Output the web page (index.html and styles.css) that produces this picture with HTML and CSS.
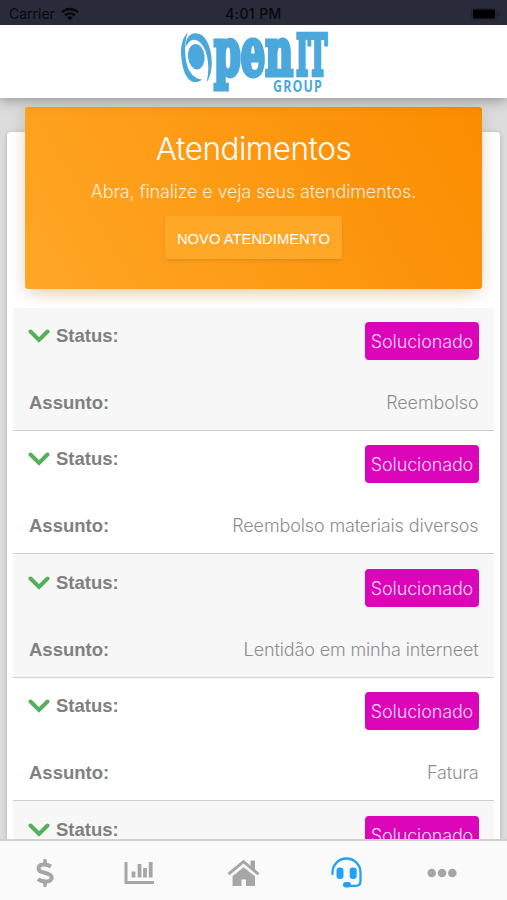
FILE: index.html
```
<!DOCTYPE html>
<html lang="pt-BR">
<head>
    <meta charset="UTF-8">
    <meta name="viewport" content="width=device-width, initial-scale=1.0">
    <title>Atendimentos</title>
    <link rel="stylesheet" href="styles.css">
</head>
<body>
    <div class="status-bar">
        <div class="carrier">
            <span>Carrier</span>
            <svg width="18" height="14" viewBox="0 0 18 14" fill="none" stroke="#08080c" stroke-width="2.4">
                <path d="M1 5.2a11.5 11.5 0 0 1 16 0"/>
                <path d="M4 8.4a7.2 7.2 0 0 1 10 0"/>
                <path d="M9 13.6l-3-3a4.3 4.3 0 0 1 6 0z" fill="#08080c" stroke="none"/>
            </svg>
        </div>
        <span class="time">4:01 PM</span>
        <div class="battery">
            <svg width="30" height="12" viewBox="0 0 30 12">
                <rect x="0.5" y="0.5" width="25" height="11" rx="3" fill="none" stroke="#222230"/>
                <rect x="2" y="1.500" width="22" height="9" rx="1.500" fill="#000"/>
                <path d="M27 4c2 .6 2 3.400 0 4z" fill="#1d1d29"/>
            </svg>
        </div>
    </div>

    <header class="header">
        <svg class="logo" width="150" height="68" viewBox="0 0 150 68" fill="#4aa8dc">
            <!-- swirl -->
            <ellipse cx="17.3" cy="29.700" rx="8.300" ry="12.800" transform="rotate(-6 17.300 29.700)"/>
            <path d="M8.800 5.500C3 11 1.500 20 2.200 29C3 42 7 52 13 54.500C17 56 21 54.500 23 52.500C16 52 10 46 7.800 37C5.500 27 5.500 14 8.800 5.500z"/>
            <path d="M7.500 13C9.500 8 13.500 5.800 17 6.200C24 6.500 29 13 31.500 24C34 35 33 48 27.500 55.500C30.500 44 29.500 33 26.500 24C23 15 17 11 12 13.500C9.500 15 8 17.500 6.800 20C6.800 17 6.900 15 7.500 13z"/>
            <g class="logo-word">
                <text transform="translate(35 47.500) scale(1 1.700)" font-size="38" textLength="79" lengthAdjust="spacingAndGlyphs">pen</text>
                <text transform="translate(117 47.500) scale(1 1.480)" font-size="38" textLength="31" lengthAdjust="spacingAndGlyphs">IT</text>
            </g>
            <text class="logo-group" x="94" y="65" textLength="50" lengthAdjust="spacingAndGlyphs">GROUP</text>
        </svg>
    </header>

    <main class="content">
        <div class="card">
            <div class="banner">
                <h1>Atendimentos</h1>
                <p>Abra, finalize e veja seus atendimentos.</p>
                <button class="btn">NOVO ATENDIMENTO</button>
            </div>

            <ul class="list">
                <li class="item">
                    <div class="row">
                        <div class="label"><svg class="chevron" viewBox="0 0 22 14"><path d="M2.500 2.500l8.500 8.500 8.500-8.500"/></svg>Status:</div>
                        <span class="badge"><span>Solucionado</span></span>
                    </div>
                    <div class="row subject"><b>Assunto:</b><span>Reembolso</span></div>
                </li>
                <li class="item">
                    <div class="row">
                        <div class="label"><svg class="chevron" viewBox="0 0 22 14"><path d="M2.500 2.500l8.500 8.500 8.500-8.500"/></svg>Status:</div>
                        <span class="badge"><span>Solucionado</span></span>
                    </div>
                    <div class="row subject"><b>Assunto:</b><span>Reembolso materiais diversos</span></div>
                </li>
                <li class="item">
                    <div class="row">
                        <div class="label"><svg class="chevron" viewBox="0 0 22 14"><path d="M2.500 2.500l8.500 8.500 8.500-8.500"/></svg>Status:</div>
                        <span class="badge"><span>Solucionado</span></span>
                    </div>
                    <div class="row subject"><b>Assunto:</b><span>Lentidão em minha interneet</span></div>
                </li>
                <li class="item">
                    <div class="row">
                        <div class="label"><svg class="chevron" viewBox="0 0 22 14"><path d="M2.500 2.500l8.500 8.500 8.500-8.500"/></svg>Status:</div>
                        <span class="badge"><span>Solucionado</span></span>
                    </div>
                    <div class="row subject"><b>Assunto:</b><span>Fatura</span></div>
                </li>
                <li class="item">
                    <div class="row">
                        <div class="label"><svg class="chevron" viewBox="0 0 22 14"><path d="M2.500 2.500l8.500 8.500 8.500-8.500"/></svg>Status:</div>
                        <span class="badge"><span>Solucionado</span></span>
                    </div>
                </li>
            </ul>
        </div>
    </main>

    <nav class="tabs">
        <a class="tab">
            <svg width="18" height="30" viewBox="0 0 18 30" fill="none" stroke="currentColor" stroke-width="4">
                <path d="M15 8.500C12 6.800 9.500 6.400 7 6.500C2 6.800 1.200 12 5 13.600L12.500 16C17.500 18 16 23.500 10.500 23.500C7 23.600 4 22.800 2 21"/>
                <path d="M9 2.500v4M9 23.500v4" stroke-width="3.600" stroke-linecap="round"/>
            </svg>
        </a>
        <a class="tab">
            <svg width="30" height="24" viewBox="0 0 30 24" fill="none" stroke="currentColor">
                <path d="M2 1v20.500h28" stroke-width="3"/>
                <path d="M9.500 16.500v-6M15.500 16.500V3M21 16.500V7M26.700 16.500V1" stroke-width="3.800"/>
            </svg>
        </a>
        <a class="tab">
            <svg width="33" height="28" viewBox="0 0 33 28" fill="currentColor">
                <path d="M16.500 8.200L5.500 17.200V27h9V20.500h4.500v6.500h9V17.200z"/>
                <path d="M1.500 15.200L16.500 2.600l15 12.600" fill="none" stroke="currentColor" stroke-width="3"/>
                <path d="M23.500 1.500h4.500v11.500l-4.500-4z"/>
            </svg>
        </a>
        <a class="tab active">
            <svg width="31" height="31" viewBox="0 0 31 31" fill="currentColor">
                <path d="M1.500 17v-1.500a14 14 0 0 1 28 0V24q0 4.800-4.800 4.800H16" fill="none" stroke="currentColor" stroke-width="2.300" stroke-linecap="round"/>
                <rect x="5.500" y="10.500" width="7" height="11.500" rx="3"/>
                <rect x="18.700" y="10.500" width="7" height="11.500" rx="3"/>
                <rect x="12" y="25" width="8" height="5.500" rx="2.700"/>
            </svg>
        </a>
        <a class="tab">
            <svg width="30" height="10" viewBox="0 0 30 10" fill="currentColor">
                <circle cx="4.700" cy="5" r="4.300"/>
                <circle cx="15" cy="5" r="4.300"/>
                <circle cx="25.300" cy="5" r="4.300"/>
            </svg>
        </a>
    </nav>
</body>
</html>
```
FILE: styles.css
```
* {
    box-sizing: border-box;
}

body {
    margin: 0;
    height: 900px;
    overflow: hidden;
    display: flex;
    flex-direction: column;
    font-family: Inter, "Liberation Sans", sans-serif;
    background-color: #dcdcdc;
}

.status-bar {
    height: 25px;
    flex: none;
    display: grid;
    grid-template-columns: 1fr auto 1fr;
    align-items: center;
    padding: 2px 6px 0 9px;
    background-color: #292a3a;
    color: #08080c;
    font-size: 14px;
    z-index: 2;
}

.carrier {
    display: flex;
    align-items: center;
    gap: 6px;
}

.time {
    font-size: 14px;
    font-weight: 500;
    letter-spacing: 0.4px;
    padding-right: 3px;
}

.battery {
    display: flex;
    justify-content: flex-end;
}

.header {
    height: 73px;
    flex: none;
    display: flex;
    justify-content: center;
    background-color: #fff;
    box-shadow: 0 2px 12px rgba(0, 0, 0, 0.35);
    z-index: 1;
}

.logo {
    margin-top: 2px;
    overflow: visible;
}

.logo-word {
    font-family: "DejaVu Serif", serif;
    font-weight: bold;
    stroke: #4aa8dc;
    stroke-width: 4px;
}

.logo-word text {
    vector-effect: non-scaling-stroke;
}

.logo-group {
    font-family: "Open Sans", sans-serif;
    font-weight: 700;
    font-size: 16px;
    letter-spacing: 1.5px;
}

.content {
    flex: 1;
    min-height: 0;
    overflow: hidden;
    padding: 34px 7px 0;
}

.card {
    height: 900px;
    padding: 0 6px;
    background-color: #fff;
    border-radius: 4px;
    box-shadow: 0 1px 5px rgba(0, 0, 0, 0.2);
}

.banner {
    position: relative;
    top: -25px;
    height: 182px;
    margin: 0 12px -6.4px;
    padding-top: 22px;
    border-radius: 3px;
    background: linear-gradient(60deg, #ffa726, #fb8c00);
    box-shadow: 0 10px 18px -8px rgba(255, 152, 0, 0.35), 0 3px 16px rgba(0, 0, 0, 0.12);
    color: #fff;
    text-align: center;
}

.banner h1 {
    margin: 0;
    font-size: 31.5px;
    line-height: 40px;
    font-weight: 300;
    letter-spacing: -0.5px;
}

.banner p {
    margin: 11px 0 12px;
    font-size: 18px;
    line-height: 24px;
    font-weight: 300;
    letter-spacing: -0.15px;
    color: rgba(255, 255, 255, 0.85);
}

.btn {
    width: 177px;
    height: 43px;
    padding: 2px 0 0;
    border: none;
    border-radius: 3px;
    background-color: #ffa726;
    box-shadow: 0 2px 3px rgba(150, 100, 40, 0.25);
    color: #fff;
    font-family: "Liberation Sans", sans-serif;
    font-size: 14.8px;
}

.list {
    margin: 0;
    padding: 0;
    list-style: none;
}

.item {
    height: 123.4px;
    padding: 14.4px 15px 0;
    border-bottom: 1px solid #cfcfcf;
    color: #8e8e8e;
    font-size: 18px;
}

.item:nth-child(odd) {
    background-color: #f7f7f7;
}

.row {
    display: flex;
    justify-content: space-between;
    align-items: flex-start;
    font-weight: 300;
    letter-spacing: -0.13px;
}

.label,
.subject b {
    font-family: "Liberation Sans", sans-serif;
    font-size: 18.5px;
    font-weight: bold;
    letter-spacing: 0;
    color: #808080;
}

.label {
    display: flex;
    align-items: center;
    gap: 6.5px;
    height: 28px;
}

.chevron {
    width: 22px;
    height: 14px;
    margin-left: -0.5px;
    fill: none;
    stroke: #55b05a;
    stroke-width: 4;
    stroke-linecap: round;
}

.badge {
    width: 114px;
    height: 38px;
    display: flex;
    justify-content: center;
    align-items: center;
    padding-top: 1px;
    border-radius: 4px;
    background-color: #db04b9;
    color: #ffd9f8;
}

.subject {
    align-items: center;
    height: 24px;
    margin-top: 31px;
    padding: 0 0.5px 0 1px;
}

.subject span {
    margin-top: -1px;
}

.tabs {
    height: 61px;
    flex: none;
    display: grid;
    grid-template-columns: 90px 98px 110px 96px 96px;
    padding-top: 4px;
    border-top: 2px solid #d0d0d0;
    background-color: #fafafa;
    z-index: 1;
}

.tab {
    display: flex;
    justify-content: center;
    align-items: center;
    color: #a6a6a6;
}

.tab.active {
    color: #22a2f6;
}
```
